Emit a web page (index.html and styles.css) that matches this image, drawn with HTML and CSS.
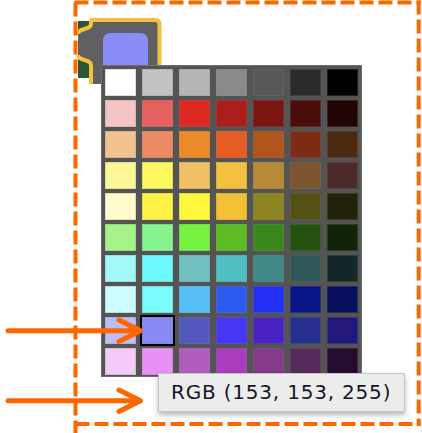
FILE: index.html
```html
<!DOCTYPE html>
<html>
<head>
<meta charset="utf-8">
<link rel="stylesheet" href="styles.css">
</head>
<body>
<div class="stage">
  <svg class="workspace" width="422" height="433" viewBox="0 0 422 433">
    <rect class="parent-block" x="78" y="21" width="14" height="57"/>
    <path class="block-fill" d="M 91 20 H 155 Q 159.5 20 159.5 24.5 V 84 H 91 V 65 C 91 59 78 61 78 55 V 34 C 78 28 91 30 91 24 Z"/>
    <path class="block-edge" d="M 78 34 C 78 28 91 30 91 24 V 20 H 155 Q 159.5 20 159.5 24.5 V 84 M 91 84 V 65 C 91 59 78 61 78 55"/>
    <rect class="colour-field" x="103" y="33" width="45" height="44" rx="7"/>
    <g class="frame">
      <line x1="73.5" y1="2.5" x2="420.7" y2="2.5" stroke-dashoffset="-1"/>
      <line x1="418.7" y1="0.5" x2="418.7" y2="426" />
      <line x1="75.5" y1="424" x2="420.7" y2="424" />
      <line x1="75.5" y1="0.5" x2="75.5" y2="433" stroke-dashoffset="-2"/>
    </g>
  </svg>

  <div class="palette">
    <span class="sw" style="background:#ffffff"></span>
    <span class="sw" style="background:#c2c2c2"></span>
    <span class="sw" style="background:#b5b5b5"></span>
    <span class="sw" style="background:#8a8a8a"></span>
    <span class="sw" style="background:#585858"></span>
    <span class="sw" style="background:#2a2a2a"></span>
    <span class="sw" style="background:#000000"></span>

    <span class="sw" style="background:#f5c4c4"></span>
    <span class="sw" style="background:#e76060"></span>
    <span class="sw" style="background:#df2a22"></span>
    <span class="sw" style="background:#aa1e1b"></span>
    <span class="sw" style="background:#7a1512"></span>
    <span class="sw" style="background:#4d0c0c"></span>
    <span class="sw" style="background:#220404"></span>

    <span class="sw" style="background:#f2c28f"></span>
    <span class="sw" style="background:#ec8b62"></span>
    <span class="sw" style="background:#ec8a28"></span>
    <span class="sw" style="background:#e65d24"></span>
    <span class="sw" style="background:#b0561d"></span>
    <span class="sw" style="background:#7c2c14"></span>
    <span class="sw" style="background:#4c2a0f"></span>

    <span class="sw" style="background:#fdf897"></span>
    <span class="sw" style="background:#fdf85f"></span>
    <span class="sw" style="background:#f2c064"></span>
    <span class="sw" style="background:#f3c040"></span>
    <span class="sw" style="background:#b88a38"></span>
    <span class="sw" style="background:#7c5430"></span>
    <span class="sw" style="background:#4c2a2a"></span>

    <span class="sw" style="background:#fefccd"></span>
    <span class="sw" style="background:#fef246"></span>
    <span class="sw" style="background:#fef73c"></span>
    <span class="sw" style="background:#f4c033"></span>
    <span class="sw" style="background:#8c8520"></span>
    <span class="sw" style="background:#545014"></span>
    <span class="sw" style="background:#222209"></span>

    <span class="sw" style="background:#a6f387"></span>
    <span class="sw" style="background:#86f48c"></span>
    <span class="sw" style="background:#74f43e"></span>
    <span class="sw" style="background:#5dbc23"></span>
    <span class="sw" style="background:#38881b"></span>
    <span class="sw" style="background:#22540f"></span>
    <span class="sw" style="background:#112407"></span>

    <span class="sw" style="background:#a3f8f8"></span>
    <span class="sw" style="background:#6cf8fc"></span>
    <span class="sw" style="background:#71c0c0"></span>
    <span class="sw" style="background:#4fbfc1"></span>
    <span class="sw" style="background:#418888"></span>
    <span class="sw" style="background:#2f5656"></span>
    <span class="sw" style="background:#122828"></span>

    <span class="sw" style="background:#cdfcfc"></span>
    <span class="sw" style="background:#79fafb"></span>
    <span class="sw" style="background:#57c0f8"></span>
    <span class="sw" style="background:#2f5bf5"></span>
    <span class="sw" style="background:#2331f5"></span>
    <span class="sw" style="background:#0a1489"></span>
    <span class="sw" style="background:#070e5c"></span>

    <span class="sw" style="background:#bdbdf8"></span>
    <span class="sw selected" style="background:#8989f5"></span>
    <span class="sw" style="background:#5558bd"></span>
    <span class="sw" style="background:#4737f5"></span>
    <span class="sw" style="background:#4a22c1"></span>
    <span class="sw" style="background:#28308f"></span>
    <span class="sw" style="background:#22187b"></span>

    <span class="sw" style="background:#f5c9f8"></span>
    <span class="sw" style="background:#e890f5"></span>
    <span class="sw" style="background:#b05dbd"></span>
    <span class="sw" style="background:#a93dbd"></span>
    <span class="sw" style="background:#843a89"></span>
    <span class="sw" style="background:#572a5d"></span>
    <span class="sw" style="background:#250b2d"></span>
  </div>

  <div class="tooltip">RGB (153, 153, 255)</div>

  <svg class="arrows" width="422" height="433" viewBox="0 0 422 433">
    <g class="arrow">
      <line x1="8" y1="330.7" x2="139" y2="330.7"/>
      <polyline points="119,320 140.5,330.7 119,341.5"/>
    </g>
    <g class="arrow">
      <line x1="8" y1="400.7" x2="139" y2="400.7"/>
      <polyline points="119,390 140.5,400.7 119,411.5"/>
    </g>
  </svg>
</div>
</body>
</html>
```

FILE: styles.css
```css
html, body {
  margin: 0;
  padding: 0;
  background: #ffffff;
}

.stage {
  position: relative;
  width: 422px;
  height: 433px;
  overflow: hidden;
  font-family: "DejaVu Sans", "Liberation Sans", sans-serif;
}

.workspace {
  display: block;
}

.parent-block {
  fill: #2d5535;
}

.block-fill {
  fill: #606060;
}

.block-edge {
  fill: none;
  stroke: #f4c03e;
  stroke-width: 4;
  stroke-linejoin: round;
}

.colour-field {
  fill: #8a8cf8;
}

.frame line {
  stroke: #ff6600;
  stroke-width: 4;
  stroke-dasharray: 14 5;
}

.palette {
  position: absolute;
  left: 101px;
  top: 65px;
  box-sizing: border-box;
  padding: 3px 3px 1px 3px;
  border: 1px solid #6e6e6e;
  background: #545454;
  display: grid;
  grid-template-columns: repeat(7, 31px);
  grid-template-rows: repeat(10, 27px);
  column-gap: 6px;
  row-gap: 4px;
}

.sw {
  display: block;
  box-shadow: inset 0 0 0 1px rgba(128, 128, 128, 0.25);
}

.sw.selected {
  outline: 2px solid #000000;
  outline-offset: 0;
}

.tooltip {
  position: absolute;
  left: 158px;
  top: 373px;
  width: 247px;
  height: 39px;
  box-sizing: border-box;
  border: 1px solid #c4c4c4;
  background: #ececec;
  box-shadow: 0 3px 5px rgba(0, 0, 0, 0.28);
  display: flex;
  align-items: center;
  padding: 0 0 2px 12px;
  font-family: "DejaVu Sans", sans-serif;
  font-size: 20px;
  letter-spacing: 0.8px;
  color: #15152a;
  white-space: nowrap;
}

.arrows {
  position: absolute;
  left: 0;
  top: 0;
  pointer-events: none;
}

.arrow line,
.arrow polyline {
  fill: none;
  stroke: #ff6600;
  stroke-width: 5;
  stroke-linecap: round;
  stroke-linejoin: round;
}
```
